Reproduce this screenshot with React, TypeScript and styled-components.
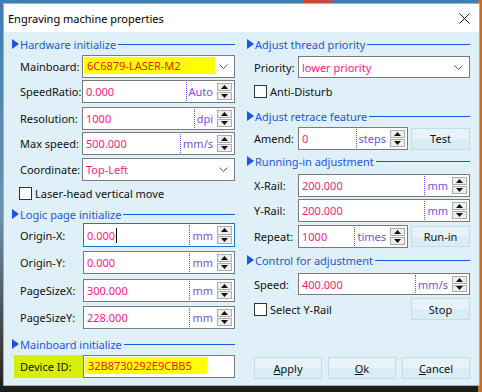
import React from "react";
import styled, { createGlobalStyle } from "styled-components";

const GlobalStyle = createGlobalStyle`
  html, body { margin: 0; padding: 0; width: 482px; height: 392px; overflow: hidden; }
  body {
    font-family: "Noto Sans", "Open Sans", sans-serif;
    font-size: 11px;
    background:
      radial-gradient(circle at 318px 0px, #c84a3a 0 14px, transparent 15px),
      linear-gradient(to right, transparent 0 478px, #c07030 478px),
      linear-gradient(to bottom, #3f7db3 0%, #6c93ad 55%, #3a3430 92%, #201a16 100%);
  }
`;

const Win = styled.div`
  box-sizing: border-box;
  margin: 3px 0 0 3px;
  width: 477px;
  height: 383px;
  border: 1px solid #f0a13a;
  background: #dff0f8;
  display: flex;
  flex-direction: column;
`;

const TitleBar = styled.div`
  height: 28px;
  background: #ffffff;
  display: flex;
  align-items: center;
  padding: 0 9px 0 4px;
  color: #000;
  font-size: 11px;
`;

const TitleText = styled.div`
  flex: 1;
`;

const Body = styled.div`
  display: grid;
  grid-template-columns: 223px 223px;
  column-gap: 12px;
  padding: 0 8px;
`;

const Column = styled.div`
  display: flex;
  flex-direction: column;
`;

const Header = styled.div<{ $mt: number }>`
  display: flex;
  align-items: center;
  height: 16px;
  margin-top: ${(p) => p.$mt}px;
  color: #2457e0;
  white-space: nowrap;
`;

const Tri = styled.span`
  width: 0;
  height: 0;
  border-left: 7px solid #1a55e6;
  border-top: 5px solid transparent;
  border-bottom: 5px solid transparent;
  margin-right: 1px;
`;

const HeaderLine = styled.span`
  flex: 1;
  height: 1px;
  background: #0f5ee0;
  margin-left: 2px;
`;

const Row = styled.div<{ $mt: number; $indent: number; $h?: number }>`
  display: flex;
  align-items: center;
  margin-top: ${(p) => p.$mt}px;
  padding-left: ${(p) => p.$indent}px;
  height: ${(p) => p.$h ?? 23}px;
`;

const Label = styled.div<{ $w: number; $hl?: boolean }>`
  width: ${(p) => p.$w}px;
  flex: none;
  color: #111;
  align-self: stretch;
  display: flex;
  align-items: center;
  white-space: nowrap;
  ${(p) => (p.$hl ? "background: #d6ef00; margin-left: -6px; padding-left: 6px;" : "")}
`;

const Field = styled.div<{ $focus?: boolean; $w?: number }>`
  box-sizing: border-box;
  height: 100%;
  ${(p) => (p.$w ? `width: ${p.$w}px; flex: none;` : "flex: 1;")}
  border: 1px solid ${(p) => (p.$focus ? "#1c74cc" : "#7a7a7a")};
  background: #fff;
  display: flex;
  align-items: stretch;
`;

const Value = styled.div<{ $hl?: boolean; $w?: number }>`
  ${(p) => (p.$w ? `width: ${p.$w}px; flex: none;` : "flex: 1;")}
  display: flex;
  align-items: center;
  padding-left: 3px;
  color: ${(p) => (p.$hl ? "#ee1535" : "#fa1a7c")};
  background: ${(p) => (p.$hl ? "#ffff00" : "transparent")};
  margin: ${(p) => (p.$hl ? "1px 0 3px 1px" : "0")};
  white-space: nowrap;
`;

const Caret = styled.span`
  display: inline-block;
  width: 1px;
  height: 15px;
  background: #000;
  margin-left: 1px;
`;

const Unit = styled.div`
  display: flex;
  align-items: center;
  border-left: 1px dotted #6a4fd8;
  margin: 1px 0;
  padding: 0 4px 0 2px;
  color: #7553e0;
`;

const Spin = styled.div`
  display: flex;
  flex-direction: column;
  gap: 1px;
  width: 15px;
  margin: 2px 2px 2px 0;
`;

const SpinBtn = styled.div`
  flex: 1;
  box-sizing: border-box;
  border: 1px solid #adadad;
  background: #eeeeee;
  display: flex;
  align-items: center;
  justify-content: center;
`;

const Chevron = styled.div`
  display: flex;
  align-items: center;
  padding: 0 6px 0 4px;
`;

const CheckRow = styled.label<{ $mt: number }>`
  display: flex;
  align-items: center;
  height: 16px;
  margin-top: ${(p) => p.$mt}px;
  padding-left: 7px;
  color: #111;
  gap: 3px;
  white-space: nowrap;
`;

const Box = styled.span`
  box-sizing: border-box;
  width: 13px;
  height: 13px;
  border: 1px solid #333;
  background: #fff;
`;

const Btn = styled.div<{ $w: number; $h: number }>`
  box-sizing: border-box;
  width: ${(p) => p.$w}px;
  height: ${(p) => p.$h}px;
  flex: none;
  border: 1px solid #c5dce8;
  background: linear-gradient(#e7f3f9 0 50%, #d9edf6 50% 100%);
  color: #111;
  display: flex;
  align-items: center;
  justify-content: center;
`;

const SplitRow = styled.div<{ $mt: number; $h: number }>`
  display: flex;
  align-items: center;
  justify-content: space-between;
  margin-top: ${(p) => p.$mt}px;
  height: ${(p) => p.$h}px;
`;

const ButtonBar = styled.div<{ $mt: number }>`
  display: flex;
  justify-content: flex-end;
  gap: 6px;
  margin-top: ${(p) => p.$mt}px;
`;

const Arrow = ({ up }: { up?: boolean }) => (
  <svg width="7" height="4" viewBox="0 0 7 4">
    <path d={up ? "M0 4 L3.5 0 L7 4 Z" : "M0 0 L3.5 4 L7 0 Z"} fill="#111" />
  </svg>
);

const SpinBox = () => (
  <Spin>
    <SpinBtn>
      <Arrow up />
    </SpinBtn>
    <SpinBtn>
      <Arrow />
    </SpinBtn>
  </Spin>
);

const ChevronIcon = () => (
  <Chevron>
    <svg width="9" height="5" viewBox="0 0 9 5">
      <path d="M0.5 0.5 L4.5 4.5 L8.5 0.5" stroke="#555" fill="none" strokeWidth="1" />
    </svg>
  </Chevron>
);

const SectionHead = ({ text, mt }: { text: string; mt: number }) => (
  <Header $mt={mt}>
    <Tri />
    {text}
    <HeaderLine />
  </Header>
);

type NumProps = {
  label: string;
  value: string;
  unit: string;
  mt: number;
  lw: number;
  indent: number;
  focus?: boolean;
  fw?: number;
  h?: number;
};

const NumRow = ({ label, value, unit, mt, lw, indent, focus, fw, h }: NumProps) => (
  <Row $mt={mt} $indent={indent} $h={h}>
    <Label $w={lw}>{label}</Label>
    <Field $focus={focus} $w={fw}>
      <Value>
        {value}
        {focus && <Caret />}
      </Value>
      <Unit>{unit}</Unit>
      <SpinBox />
    </Field>
  </Row>
);

const CloseIcon = () => (
  <svg width="11" height="11" viewBox="0 0 11 11">
    <path d="M0.5 0.5 L10.5 10.5 M10.5 0.5 L0.5 10.5" stroke="#111" strokeWidth="1" />
  </svg>
);

export default function App() {
  return (
    <>
      <GlobalStyle />
      <Win>
        <TitleBar>
          <TitleText>Engraving machine properties</TitleText>
          <CloseIcon />
        </TitleBar>
        <Body>
          <Column>
            <SectionHead text="Hardware initialize" mt={4} />
            <Row $mt={3} $indent={8}>
              <Label $w={62}>Mainboard:</Label>
              <Field>
                <Value $hl>6C6879-LASER-M2</Value>
                <ChevronIcon />
              </Field>
            </Row>
            <NumRow label="SpeedRatio:" value="0.000" unit="Auto" mt={2} lw={62} indent={8} />
            <NumRow label="Resolution:" value="1000" unit="dpi" mt={4} lw={62} indent={8} />
            <NumRow label="Max speed:" value="500.000" unit="mm/s" mt={2} lw={62} indent={8} />
            <Row $mt={3} $indent={8}>
              <Label $w={62}>Coordinate:</Label>
              <Field>
                <Value>Top-Left</Value>
                <ChevronIcon />
              </Field>
            </Row>
            <CheckRow $mt={4}>
              <Box />
              Laser-head vertical move
            </CheckRow>
            <SectionHead text="Logic page initialize" mt={5} />
            <NumRow label="Origin-X:" value="0.000" unit="mm" mt={1} lw={63} indent={8} focus h={24} />
            <NumRow label="Origin-Y:" value="0.000" unit="mm" mt={4} lw={63} indent={8} />
            <NumRow label="PageSizeX:" value="300.000" unit="mm" mt={5} lw={63} indent={8} />
            <NumRow label="PageSizeY:" value="228.000" unit="mm" mt={4} lw={63} indent={8} />
            <SectionHead text="Mainboard initialize" mt={7} />
            <Row $mt={3} $indent={8}>
              <Label $w={63} $hl>
                Device ID:
              </Label>
              <Field>
                <Value $hl $w={119}>
                  32B8730292E9CBB5
                </Value>
              </Field>
            </Row>
          </Column>
          <Column>
            <SectionHead text="Adjust thread priority" mt={4} />
            <Row $mt={4} $indent={7} $h={22}>
              <Label $w={44}>Priority:</Label>
              <Field>
                <Value>lower priority</Value>
                <ChevronIcon />
              </Field>
            </Row>
            <CheckRow $mt={5}>
              <Box />
              Anti-Disturb
            </CheckRow>
            <SectionHead text="Adjust retrace feature" mt={9} />
            <SplitRow $mt={3} $h={23}>
              <NumRow label="Amend:" value="0" unit="steps" mt={0} lw={44} indent={7} fw={110} />
              <Btn $w={59} $h={22}>Test</Btn>
            </SplitRow>
            <SectionHead text="Running-in adjustment" mt={3} />
            <NumRow label="X-Rail:" value="200.000" unit="mm" mt={5} lw={44} indent={7} />
            <NumRow label="Y-Rail:" value="200.000" unit="mm" mt={2} lw={44} indent={7} />
            <SplitRow $mt={3} $h={23}>
              <NumRow label="Repeat:" value="1000" unit="times" mt={0} lw={44} indent={7} fw={110} />
              <Btn $w={59} $h={21}>Run-in</Btn>
            </SplitRow>
            <SectionHead text="Control for adjustment" mt={4} />
            <NumRow label="Speed:" value="400.000" unit="mm/s" mt={5} lw={44} indent={7} h={22} />
            <SplitRow $mt={3} $h={22}>
              <CheckRow $mt={0}>
                <Box />
                Select Y-Rail
              </CheckRow>
              <Btn $w={59} $h={22}>Stop</Btn>
            </SplitRow>
            <ButtonBar $mt={37}>
              <Btn $w={68} $h={22}>
                <u>A</u>pply
              </Btn>
              <Btn $w={68} $h={22}>
                <u>O</u>k
              </Btn>
              <Btn $w={68} $h={22}>
                <u>C</u>ancel
              </Btn>
            </ButtonBar>
          </Column>
        </Body>
      </Win>
    </>
  );
}
